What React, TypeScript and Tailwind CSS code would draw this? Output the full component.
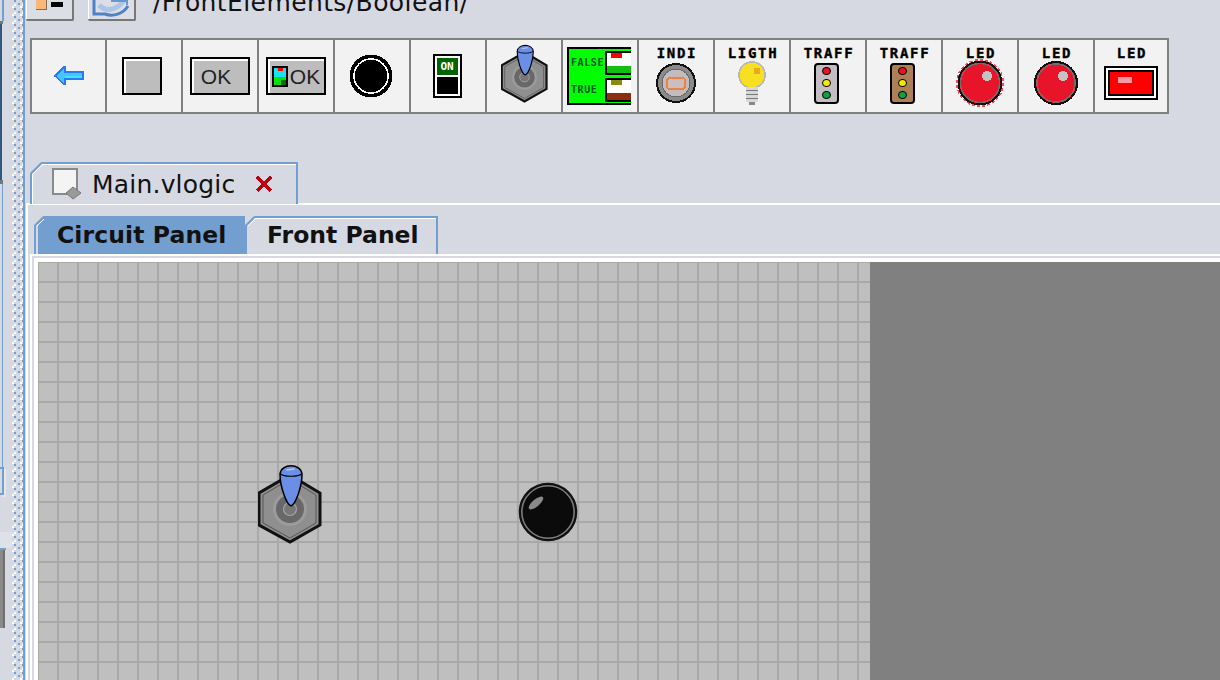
import React from 'react';

const ui = "font-['DejaVu_Sans',sans-serif]";
const pixel = "font-['DejaVu_Sans_Mono',monospace] font-bold text-[14px] leading-[14px] tracking-[1.7px] text-black [-webkit-text-stroke:0.4px_black]";

const Joystick: React.FC<{ className?: string }> = ({ className }) => (
  <svg viewBox="0 0 64 80" className={className}>
    <polygon points="32,11 62,29 62,61 32,78 1,61 1,29" fill="#8f8f8f" stroke="#111" strokeWidth="3" />
    <polygon points="32,15 58,31 58,59 32,74 5,59 5,31" fill="#8f8f8f" stroke="#555" strokeWidth="1" />
    <circle cx="32" cy="45" r="17" fill="#9c9c9c" />
    <circle cx="32" cy="45" r="14" fill="#686868" />
    <circle cx="32" cy="45" r="6.5" fill="#777" stroke="#a5a5a5" strokeWidth="1.2" />
    <path d="M22 10 C22 22 28 40 33 42 C38 40 44 22 44 10 C43 -1 23 -1 22 10 Z" fill="#6b8fe6" stroke="#000" strokeWidth="1.5" />
    <path d="M22.5 10 C26 13 40 13 43.5 10" fill="none" stroke="#000" strokeWidth="1.2" />
    <path d="M29 6 L36 5" stroke="#b9c9f2" strokeWidth="1.5" strokeLinecap="round" />
  </svg>
);

const Knob: React.FC<{ className?: string }> = ({ className }) => (
  <svg viewBox="0 0 60 60" className={className}>
    <circle cx="30" cy="30" r="28.5" fill="#0b0b0b" stroke="#111" strokeWidth="1.5" />
    <circle cx="30" cy="30" r="26.2" fill="none" stroke="#7d7d7d" strokeWidth="1.6" />
    <ellipse cx="18" cy="21" rx="9" ry="3.5" transform="rotate(-40 18 21)" fill="#8a8a8a" />
  </svg>
);

const Cell: React.FC<{ label?: string; children: React.ReactNode; width?: string; last?: boolean }> = ({ label, children, width = 'w-[76px]', last }) => (
  <div className={`flex h-[76px] ${width} shrink-0 flex-col items-center justify-center border-2 border-[#808080] bg-[#f2f2f2] ${last ? '' : 'border-r-0'}`}>
    {label && <span className={`${pixel} relative z-10 mt-[6px] pl-[2px]`}>{label}</span>}
    <div className={`flex flex-1 items-center justify-center ${label ? '-translate-y-[3px]' : ''}`}>{children}</div>
  </div>
);

const GrayButton: React.FC<{ width: string; className?: string; children?: React.ReactNode }> = ({ width, className = '', children }) => (
  <div className={`flex h-[38px] ${width} ${className} items-center justify-center gap-[2px] border-2 border-black bg-[#bdbdbd] shadow-[inset_2px_2px_0_#fff] font-['Liberation_Sans',sans-serif] text-[21px] font-light leading-none text-[#222]`}>
    {children}
  </div>
);

const Led: React.FC<{ glow?: boolean }> = ({ glow }) => (
  <svg viewBox="0 0 52 52" className="h-[52px] w-[52px]" shapeRendering="crispEdges">
    {glow && <circle cx="26" cy="26" r="22.5" fill="none" stroke="#ff4658" strokeWidth="3" strokeDasharray="3 2" />}
    <circle cx="26" cy="26" r={glow ? 21.5 : 21} fill="#e8142a" stroke="#111" strokeWidth="2" />
    <circle cx="26" cy="26" r={glow ? 19.5 : 19} fill="none" stroke="#7a6a6a" strokeWidth="1.5" />
    <circle cx="33" cy="19" r="5" fill="#c4c4c4" />
  </svg>
);

const Traffic: React.FC<{ body: string }> = ({ body }) => (
  <div className={`flex h-[41px] w-[25px] -translate-x-[2px] flex-col items-center justify-center gap-[4px] rounded-[4px] border-2 border-black ${body}`}>
    <span className="h-[8px] w-[9px] rounded-full border border-black bg-[#e8141e]" />
    <span className="h-[8px] w-[9px] rounded-full border border-black bg-[#f4ea00]" />
    <span className="h-[8px] w-[9px] rounded-full border border-black bg-[#10a040]" />
  </div>
);

const Toolbar: React.FC = () => (
  <div className="ml-[5px] mt-[17px] flex">
    <Cell width="w-[75px]">
      <svg viewBox="0 0 32 22" className="h-[22px] w-[32px]" shapeRendering="crispEdges">
        <path d="M1 11 L11 1 H13 V6 H31 V15 H13 V20 H11 Z" fill="#fff" />
        <path d="M2 11 L11 2 H12 V7 H30 V14 H12 V19 H11 Z" fill="#42c8ff" stroke="#2a78ff" strokeWidth="1.5" />
        <rect x="12" y="11" width="17" height="2" fill="#3de8f4" />
      </svg>
    </Cell>
    <Cell><GrayButton width="w-[40px]" className="-translate-x-[2px]" /></Cell>
    <Cell><GrayButton width="w-[60px]"><span className="pr-[8px]">OK</span></GrayButton></Cell>
    <Cell>
      <GrayButton width="w-[60px]">
        <svg viewBox="0 0 16 21" className="h-[21px] w-[16px]" shapeRendering="crispEdges">
          <rect width="16" height="21" fill="#000" />
          <rect x="2" y="2" width="12" height="9" fill="#12e4f0" />
          <rect x="6" y="2" width="5" height="3" fill="#f00" />
          <rect x="2" y="11" width="12" height="8" fill="#08e008" />
          <rect x="9" y="14" width="5" height="5" fill="#0a6a0a" />
        </svg>
        <span>OK</span>
      </GrayButton>
    </Cell>
    <Cell>
      <svg viewBox="0 0 44 44" className="h-[44px] w-[44px] -translate-x-px" shapeRendering="crispEdges">
        <circle cx="22" cy="22" r="21.5" fill="#000" />
        <circle cx="22" cy="22" r="17" fill="#000" stroke="#fff" strokeWidth="1.5" />
      </svg>
    </Cell>
    <Cell>
      <div className="flex h-[44px] w-[29px] -translate-x-px flex-col border-2 border-black bg-white p-[2px]">
        <span className="flex h-[17px] items-center justify-center bg-[#006400] font-['DejaVu_Sans_Mono',monospace] text-[11px] font-bold leading-none text-white">ON</span>
        <span className="mt-[2px] flex-1 bg-black" />
      </div>
    </Cell>
    <Cell><Joystick className="h-[59px] w-[47px] -translate-y-[3px]" /></Cell>
    <Cell>
      <div className="-ml-[2px] flex h-[58px] w-[64px] flex-col justify-center gap-[3px] border-2 border-r-0 border-black bg-[#00ff00] pl-[2px]">
        {[
          ['FALSE', 'bg-[#f00]', 'bg-[#10c010]'],
          ['TRUE', 'bg-[#8a8a10]', 'bg-[#8a3010]'],
        ].map(([text, blob, ground]) => (
          <div key={text} className="flex items-center justify-between">
            <span className="font-['DejaVu_Sans_Mono',monospace] text-[10px] font-bold leading-none tracking-[0.6px] text-[#052]">{text}</span>
            <span className="relative h-[24px] w-[26px] overflow-hidden border-2 border-r-0 border-black bg-white">
              <span className={`absolute left-[4px] top-0 h-[5px] w-[11px] ${blob}`} />
              <span className={`absolute bottom-0 left-0 h-[7px] w-full ${ground}`} />
            </span>
          </div>
        ))}
      </div>
    </Cell>
    <Cell label="INDI">
      <svg viewBox="0 0 40 40" className="h-[40px] w-[40px]" shapeRendering="crispEdges">
        <circle cx="20" cy="20" r="19" fill="#8a8a8a" stroke="#111" strokeWidth="2" />
        <circle cx="20" cy="20" r="14" fill="#c4bcbc" stroke="#6a6a6a" strokeWidth="1" />
        <rect x="11" y="15" width="18" height="11" rx="3" fill="#c8c0c0" stroke="#f08040" strokeWidth="2" />
      </svg>
    </Cell>
    <Cell label="LIGTH">
      <svg viewBox="0 0 28 44" className="h-[44px] w-[28px]" shapeRendering="crispEdges">
        <circle cx="14" cy="14" r="13" fill="#f6e020" stroke="#b8b8b8" strokeWidth="1.5" />
        <circle cx="19" cy="10" r="3.5" fill="#e8a820" />
        <rect x="8" y="26" width="12" height="15" fill="#d8d8d8" />
        <path d="M8 29 H20 M8 33 H20 M8 37 H20" stroke="#777" strokeWidth="1" />
        <rect x="11" y="41" width="6" height="3" fill="#888" />
      </svg>
    </Cell>
    <Cell label="TRAFF"><Traffic body="bg-[#c4bec4]" /></Cell>
    <Cell label="TRAFF"><Traffic body="bg-[#ad7f58]" /></Cell>
    <Cell label="LED"><Led glow /></Cell>
    <Cell label="LED"><Led /></Cell>
    <Cell label="LED" last>
      <div className="h-[34px] w-[54px] border-2 border-black bg-white p-[2px]">
        <div className="h-full border-2 border-black bg-[#f00] pl-[8px] pt-[5px]">
          <div className="h-[6px] w-[14px] bg-[#f49aa0]" />
        </div>
      </div>
    </Cell>
  </div>
);

const Chamfer: React.FC<{ size: number; fill?: string }> = ({ size, fill = '#d6d9e2' }) => (
  <svg width={size} height={size} viewBox={`0 0 ${size} ${size}`} className="absolute -left-[2px] -top-[2px]">
    <polygon points={`0,0 ${size},0 0,${size}`} fill={fill} />
    <line x1="0.5" y1={size} x2={size} y2="0.5" stroke="#729fcf" strokeWidth="2" />
    <line x1="3" y1={size} x2={size} y2="3" stroke="#fff" strokeWidth="1" />
  </svg>
);

const Sidebar: React.FC = () => (
  <div className="flex h-full w-[12px] shrink-0 flex-col">
    <div className="h-[21px]"><div className="ml-[2px] h-full w-[2px] bg-[#729fcf]" /></div>
    <div className="h-[3px] w-[3px] bg-[#777]" />
    <div className="h-[156px] w-[2px] bg-[#34567a]" />
    <div className="h-[4px] w-[3px] bg-[#777]" />
    <div className="h-[283px]"><div className="ml-[2px] h-full w-px bg-[#729fcf]" /></div>
    <div className="h-[28px] w-[4px] border-y-2 border-r-2 border-[#729fcf] shadow-[2px_2px_0_#e4e6ec]" />
    <div className="h-[37px]" />
    <div className="h-[16px] bg-[#dfe1e8]" />
    <div className="h-[2px] w-[6px] bg-[#729fcf]" />
    <div className="h-[78px] w-[5px] border-r-2 border-[#6f6f6f] bg-[#8a8a8a]" />
  </div>
);

const Splitter: React.FC = () => (
  <div className="h-full w-[11px] shrink-0">
    <svg width="11" height="680">
      <defs>
        <pattern id="dots" width="8" height="8" patternUnits="userSpaceOnUse">
          <rect x="0" y="6" width="2" height="2" fill="#fff" />
          <rect x="2" y="4" width="2" height="2" fill="#fff" />
          <rect x="2" y="0" width="2" height="2" fill="#729fcf" />
          <rect x="6" y="3" width="2" height="2" fill="#729fcf" />
        </pattern>
      </defs>
      <rect width="11" height="680" fill="url(#dots)" />
    </svg>
  </div>
);

export default function App() {
  return (
    <div className={`flex h-[680px] w-[1220px] overflow-hidden bg-[#d6d9e2] ${ui}`}>
      <Sidebar />
      <Splitter />
      <div className="h-full w-[2px] shrink-0 bg-[#729fcf]" />

      <div className="flex min-w-0 flex-1 flex-col">
        {/* path bar, cut off by the top of the window */}
        <div className="flex h-[21px] items-end">
          <div className="ml-[1px] flex h-[21px] w-[48px] items-start justify-center gap-[4px] rounded-b-[2px] border-b-2 border-r-2 border-[#777] bg-[#dcdee5] shadow-[inset_1px_0_0_#fff]">
            <span className="h-[10px] w-[11px] border-b border-r border-[#8a6a50] bg-[#f8b878]" />
            <span className="mt-[2px] h-[5px] w-[12px] bg-black" />
          </div>
          <div className="ml-[14px] flex h-[21px] w-[48px] items-center justify-center rounded-b-[2px] border-b-2 border-r-2 border-[#777] bg-[#dcdee5] shadow-[inset_1px_0_0_#fff]">
            <svg viewBox="0 0 40 20" className="h-[20px] w-[40px]">
              <path d="M3 0 V14 H14 C22 17 32 14 37 6" fill="none" stroke="#4f82c4" strokeWidth="3" />
              <path d="M8 5 C14 12 26 11 33 0" fill="none" stroke="#a9c6e8" strokeWidth="5" />
              <path d="M20 1 H36 V5" fill="none" stroke="#6a96cc" strokeWidth="2" />
            </svg>
          </div>
          <span className="mb-[3px] ml-[17px] self-end text-[25px] leading-[30px] tracking-[0.4px] text-[#111]">/FrontElements/Boolean/</span>
        </div>

        <Toolbar />

        {/* file tab */}
        <div className="relative z-10 ml-[5px] mt-[48px] flex h-[42px] w-[268px] items-center border-x-2 border-t-2 border-[#729fcf] bg-[#d6d9e2] pl-[20px] shadow-[inset_0_1px_0_#fff,inset_1px_0_0_#fff]">
          <Chamfer size={12} />
          <svg viewBox="0 0 30 32" className="h-[32px] w-[30px] shrink-0">
            <rect x="1" y="1" width="24" height="25" fill="#f4f4f4" stroke="#8a8a8a" strokeWidth="2" />
            <polygon points="21,19 29,25 21,31 14,25" fill="#9a9a9a" stroke="#777" strokeWidth="1" />
          </svg>
          <span className="ml-[10px] text-[25px] leading-none tracking-[0.2px] text-[#111]">Main.vlogic</span>
          <svg viewBox="0 0 18 18" className="ml-[20px] h-[18px] w-[18px]" shapeRendering="crispEdges">
            <path d="M2 2 L16 16 M16 2 L2 16" stroke="#c00010" strokeWidth="3.5" />
          </svg>
        </div>

        {/* content panel */}
        <div className="-mt-[1px] ml-[1px] flex min-h-0 flex-1 flex-col border-l-2 border-t-2 border-white pl-[2px]">
          <div className="flex h-[49px] items-end pl-[4px]">
            <div className="relative flex h-[38px] w-[213px] items-center border-l-2 border-t-2 border-[#729fcf] bg-[#729fcf] pl-[21px] shadow-[inset_2px_0_0_#d6d9e2]">
              <Chamfer size={10} />
              <span className="text-[23.5px] font-bold leading-none tracking-[0.1px] text-[#111]">Circuit Panel</span>
            </div>
            <div className="relative flex h-[38px] w-[191px] items-center border-r-2 border-t-2 border-[#729fcf] pl-[20px] shadow-[inset_0_1px_0_#fff]">
              <Chamfer size={10} />
              <span className="text-[23.5px] font-bold leading-none text-[#111]">Front Panel</span>
            </div>
          </div>
          <div className="flex min-h-0 flex-1 flex-col border-l-2 border-t-2 border-white pl-[2px] pt-[2px]">
            <div className="flex min-h-0 flex-1 border-l-[4px] border-t-[4px] border-white">
              <div className="relative h-full w-[832px] shrink-0 bg-[#bfbfbf] bg-[linear-gradient(to_right,#a9a9a9_0_1px,transparent_1px_19px,#a9a9a9_19px_20px),linear-gradient(to_bottom,#a9a9a9_0_1px,transparent_1px_19px,#a9a9a9_19px_20px)] bg-[length:20px_20px]">
                <Joystick className="absolute left-[220px] top-[202px] h-[80px] w-[64px]" />
                <Knob className="absolute left-[480px] top-[220px] h-[60px] w-[60px]" />
              </div>
              <div className="h-full flex-1 bg-[#808080]" />
            </div>
          </div>
        </div>
      </div>
    </div>
  );
}
